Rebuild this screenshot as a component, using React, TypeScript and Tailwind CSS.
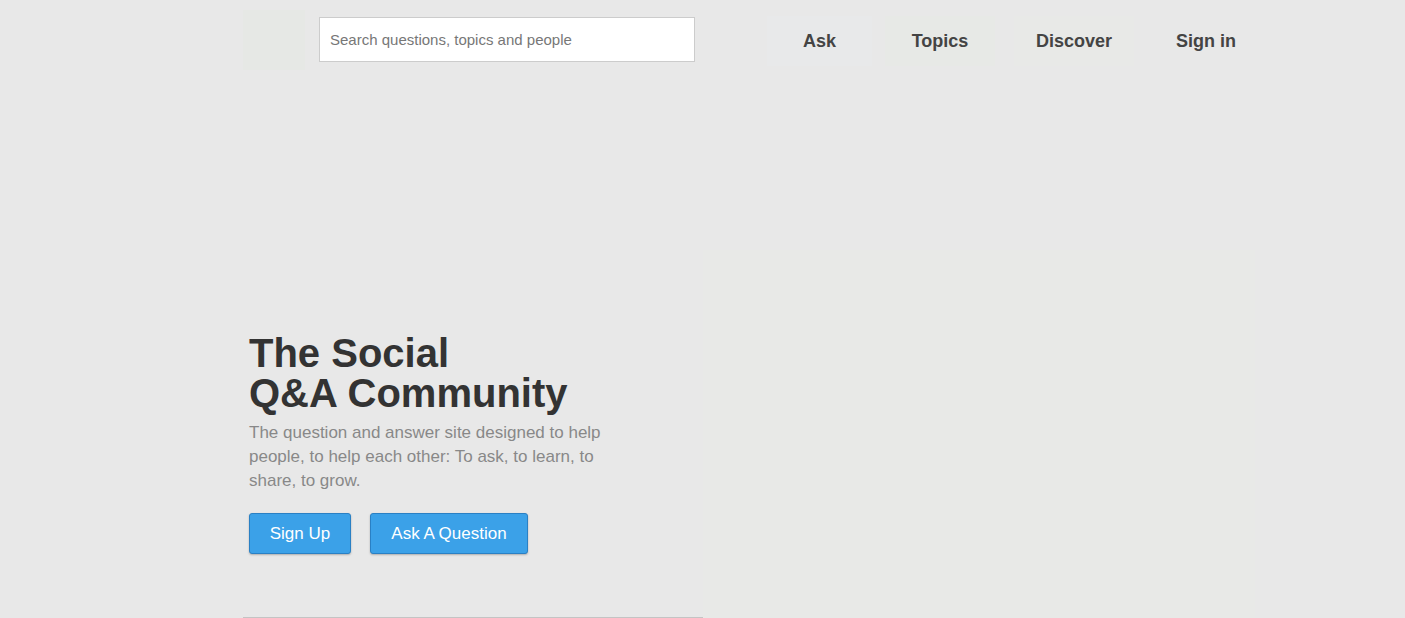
export default function App() {
  return (
    <div className="relative h-[618px] w-[1405px] overflow-hidden bg-[#e8e8e8] font-['Liberation_Sans',Arial,sans-serif]">
      {/* faint placeholder of an unloaded hero picture */}
      <div className="absolute left-[703px] top-[250px] h-[368px] w-[552px] bg-[#e8e9e7]" />

      <header className="relative flex h-[80px] items-start pl-[243px]">
        <div className="mt-[10px] h-[60px] w-[62px] bg-[#e6e8e5]" />
        <div className="ml-[14px] mt-[17px]">
          <input
            type="text"
            placeholder="Search questions, topics and people"
            className="h-[45px] w-[376px] border border-[#cccccc] bg-white px-[10px] text-[15px] text-[#555] placeholder:text-[#777] outline-none"
          />
        </div>
        <nav className="ml-[72px] mt-[16px] flex h-[50px] items-center">
          <a className="flex h-[50px] w-[105px] items-center justify-center bg-[#e8e9ea] text-[18px] font-bold text-[#444]">Ask</a>
          <a className="ml-[13px] flex h-[50px] w-[110px] items-center justify-center bg-[#e7e9e6] text-[18px] font-bold text-[#444]">Topics</a>
          <a className="ml-[19px] flex h-[50px] w-[120px] items-center justify-center bg-[#e8e9e7] text-[18px] font-bold text-[#444]">Discover</a>
          <a className="ml-[12px] flex h-[50px] w-[120px] items-center justify-center text-[18px] font-bold text-[#444]">Sign in</a>
        </nav>
      </header>

      <section className="relative ml-[249px] mt-[253px] w-[380px]">
        <h1 className="text-[40px] font-bold leading-[40px] text-[#333]">
          The Social
          <br />
          Q&amp;A Community
        </h1>
        <p className="mt-[8px] w-[362px] text-[17px] leading-[24px] text-[#888]">
          The question and answer site designed to help people, to help each other: To ask, to learn, to share, to grow.
        </p>
        <div className="mt-[20px] flex gap-[19px]">
          <button className="h-[41px] w-[102px] rounded-[3px] border border-[#2a80c4] bg-[#3ba1e8] text-[17px] text-white shadow-[0_1px_2px_rgba(0,0,0,0.25)]">
            Sign Up
          </button>
          <button className="h-[41px] w-[158px] rounded-[3px] border border-[#2a80c4] bg-[#3ba1e8] text-[17px] text-white shadow-[0_1px_2px_rgba(0,0,0,0.25)]">
            Ask A Question
          </button>
        </div>
      </section>

      <div className="absolute bottom-0 left-[243px] h-px w-[460px] bg-[#c4c4c4]" />
    </div>
  );
}
